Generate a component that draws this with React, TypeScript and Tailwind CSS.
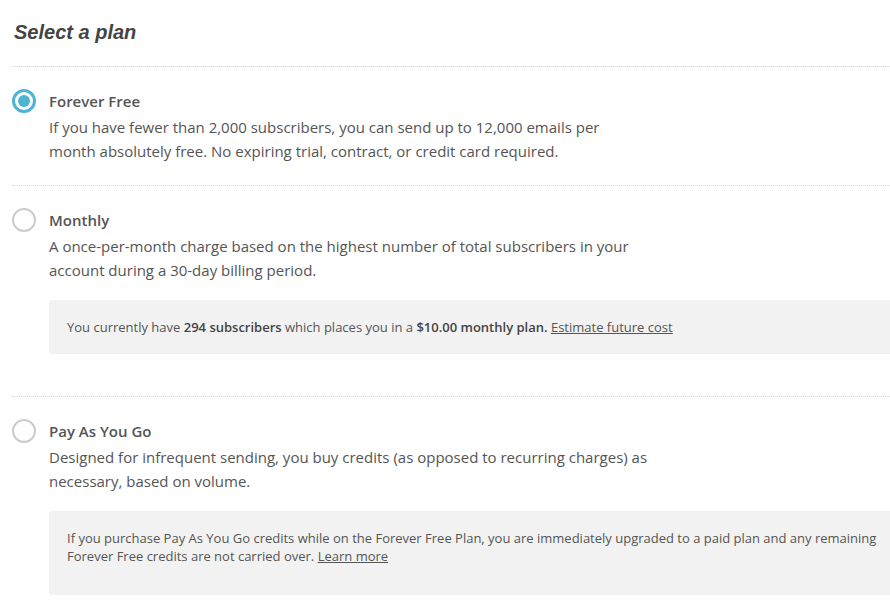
import { useState } from "react";

type Plan = {
  id: string;
  name: string;
  lines: string[];
  note?: React.ReactNode;
  notePadding?: string;
};

const plans: Plan[] = [
  {
    id: "free",
    name: "Forever Free",
    lines: [
      "If you have fewer than 2,000 subscribers, you can send up to 12,000 emails per",
      "month absolutely free. No expiring trial, contract, or credit card required.",
    ],
  },
  {
    id: "monthly",
    name: "Monthly",
    lines: [
      "A once-per-month charge based on the highest number of total subscribers in your",
      "account during a 30-day billing period.",
    ],
    note: (
      <>
        You currently have <strong className="font-semibold text-[#444]">294 subscribers</strong> which places you in a{" "}
        <strong className="font-semibold text-[#444]">$10.00 monthly plan.</strong>{" "}
        <a href="#" className="underline">Estimate future cost</a>
      </>
    ),
    notePadding: "pt-[18px] pb-[18px]",
  },
  {
    id: "payg",
    name: "Pay As You Go",
    lines: [
      "Designed for infrequent sending, you buy credits (as opposed to recurring charges) as",
      "necessary, based on volume.",
    ],
    note: (
      <>
        If you purchase Pay As You Go credits while on the Forever Free Plan, you are immediately upgraded to a paid plan and any remaining Forever Free credits are not carried over.{" "}
        <a href="#" className="underline">Learn more</a>
      </>
    ),
    notePadding: "pt-[18px] pb-[30px]",
  },
];

function Radio({ checked }: { checked: boolean }) {
  if (checked) {
    return (
      <span className="flex h-6 w-6 shrink-0 items-center justify-center rounded-full border-[3px] border-[#4fb3d2] bg-white">
        <span className="block h-[12px] w-[12px] rounded-full bg-[#4fb3d2]" />
      </span>
    );
  }
  return <span className="block h-6 w-6 shrink-0 rounded-full border-2 border-[#cccccc] bg-white" />;
}

export default function App() {
  const [selected, setSelected] = useState("free");

  return (
    <div className="min-h-screen overflow-hidden bg-white pl-3 text-[#555] [font-family:'Open_Sans',sans-serif]">
      <h1 className="pt-[17px] pl-[2px] pb-[19px] text-[20px] leading-[30px] font-bold italic text-[#444] [font-family:'Liberation_Sans',Arial,sans-serif]">
        Select a plan
      </h1>

      {plans.map((plan) => (
        <div
          key={plan.id}
          className={
            "border-t border-dotted border-[#d8d8d8] pt-[22px] " + (plan.note ? "pb-[42px]" : "pb-[22px]")
          }
        >
          <label className="flex cursor-pointer gap-[13px]" onClick={() => setSelected(plan.id)}>
            <Radio checked={selected === plan.id} />
            <span className="flex-1">
              <span className="block text-[15px] leading-6 font-semibold text-[#555]">{plan.name}</span>
              <span className="mt-[2px] block text-[15px] leading-6">
                {plan.lines.map((line) => (
                  <span key={line} className="block whitespace-nowrap">
                    {line}
                  </span>
                ))}
              </span>
            </span>
          </label>
          {plan.note && (
            <div
              className={
                "mt-[18px] ml-[37px] rounded-l-[3px] bg-[#f2f2f2] pl-[18px] pr-3 text-[13px] leading-[18px] " +
                plan.notePadding
              }
            >
              {plan.note}
            </div>
          )}
        </div>
      ))}
    </div>
  );
}
